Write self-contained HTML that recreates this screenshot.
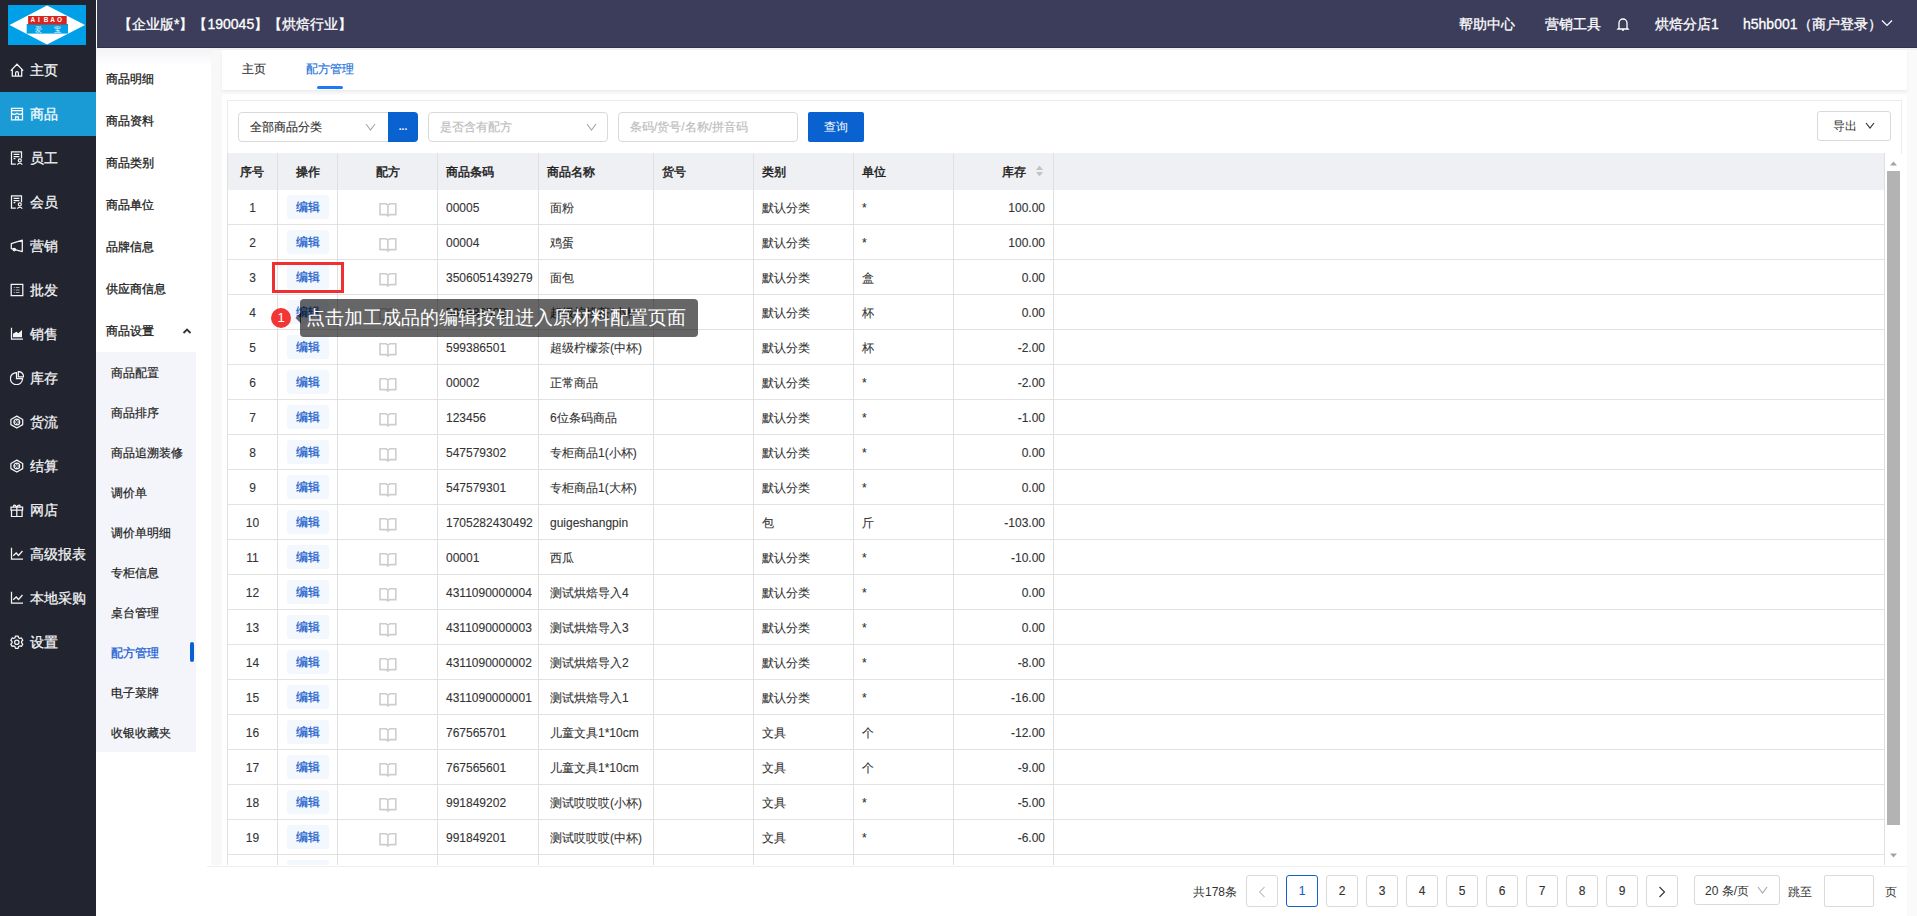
<!DOCTYPE html><html><head><meta charset="utf-8"><style>
*{box-sizing:border-box;margin:0;padding:0}
html,body{width:1917px;height:916px;overflow:hidden;background:#fff;font-family:"Liberation Sans",sans-serif;font-size:12px;color:#333}
.a{position:absolute;white-space:nowrap}
.mi{position:absolute;left:0;width:96px;height:44px;color:#f4f5f8;font-size:14px;line-height:44px}
.mi span{-webkit-text-stroke:0.25px currentColor}
.mi svg{position:absolute;left:10px;top:15px}
.mi span{position:absolute;left:30px;top:0}
.mi.on{background:#1b9bd6;color:#fff}
.si{position:absolute;left:106px;font-size:12px;line-height:16px;color:#222;-webkit-text-stroke:0.3px #222}
.ss{position:absolute;left:111px;font-size:12px;line-height:16px;color:#222;-webkit-text-stroke:0.2px currentColor}
.sel{position:absolute;height:30px;border:1px solid #d9d9d9;border-radius:4px;background:#fff;font-size:12px;line-height:28px;padding-left:11px;color:#333;-webkit-text-stroke:0.15px currentColor}
.th{position:absolute;top:154px;height:37px;line-height:37px;-webkit-text-stroke:0.45px #222;color:#222;font-size:12px}
.vl{position:absolute;width:1px;background:#e0e0e0}
.hl{position:absolute;height:1px;background:#e2e2e2}
.td{position:absolute;height:35px;line-height:35px;font-size:12px;color:#333;-webkit-text-stroke:0.1px #333}
.ed{position:absolute;left:287px;width:42px;height:24px;background:#f3f8ff;color:#0f56c9;font-size:12px;line-height:25px;text-align:center;border-radius:3px;-webkit-text-stroke:0.2px #0f56c9}
.bk{position:absolute;left:379px}
.pg{-webkit-text-stroke:0.15px currentColor;position:absolute;top:875px;width:32px;height:32px;border:1px solid #d9d9d9;border-radius:3px;text-align:center;line-height:31px;font-size:12px;color:#333;background:#fff}
</style></head><body>
<div class="a" style="left:0;top:0;width:96px;height:916px;background:#22252f"></div>
<div class="a" style="left:97px;top:0;width:1820px;height:48px;background:#3c3d5b;border-bottom:1px solid #30314d"></div>
<svg class="a" style="left:8px;top:5px" width="78" height="40" viewBox="0 0 78 40">
<rect width="78" height="40" fill="#00a0e9"/>
<polygon points="39,0.5 77,20 39,39.5 1.5,20" fill="#fff"/>
<rect x="18.7" y="19" width="41.3" height="9.6" fill="#00a0e9"/>
<rect x="20.1" y="11" width="38.6" height="8.6" fill="#d9251d"/>
<g font-size="6.4" font-weight="bold" fill="#fff" text-anchor="middle" font-family="Liberation Sans"><text x="24.7" y="17.2">A</text><text x="31" y="17.2">I</text><text x="38" y="17.2">B</text><text x="44.5" y="17.2">A</text><text x="51.5" y="17.2">O</text></g>
<text x="30" y="27" font-size="6.5" fill="#fff" text-anchor="middle">爱</text><text x="49" y="27" font-size="6.5" fill="#fff" text-anchor="middle">宝</text>
</svg>
<div class="a" style="left:118px;font-size:14px;line-height:20px;color:#fff;-webkit-text-stroke:0.3px #fff;top:14px">【企业版*】【190045】【烘焙行业】</div>
<div class="a" style="left:1459px;font-size:14px;line-height:20px;color:#fff;-webkit-text-stroke:0.3px #fff;top:14px">帮助中心</div>
<div class="a" style="left:1545px;font-size:14px;line-height:20px;color:#fff;-webkit-text-stroke:0.3px #fff;top:14px">营销工具</div>
<svg class="a" style="left:1616px;top:16px" width="14" height="16" viewBox="0 0 14 16"><path d="M3 12V7a4 4 0 0 1 8 0v5l1 1H2z M6 14h2" fill="none" stroke="#fff" stroke-width="1.3"/></svg>
<div class="a" style="left:1655px;font-size:14px;line-height:20px;color:#fff;-webkit-text-stroke:0.3px #fff;top:14px">烘焙分店1</div>
<div class="a" style="left:1743px;font-size:14px;line-height:20px;color:#fff;-webkit-text-stroke:0.3px #fff;top:14px">h5hb001（商户登录）</div>
<svg class="a" style="left:1881px;top:19px" width="12" height="9" viewBox="0 0 12 9"><path d="M1 1.5l5 5 5-5" fill="none" stroke="#fff" stroke-width="1.2"/></svg>
<div class="mi" style="top:48px"><svg width="14" height="14" viewBox="0 0 14 14"><path d="M0.8 7.6L7 1.2l6.2 6.4M2.3 6.2V13.2H11.7V6.2M5.6 13.2V10a1.4 1.4 0 0 1 2.8 0v3.2" fill="none" stroke="currentColor" stroke-width="1.25"/></svg><span>主页</span></div>
<div class="mi on" style="top:92px"><svg width="14" height="14" viewBox="0 0 14 14"><path d="M1.5 1.3H12.5V12.8H1.5ZM1.5 3.6H12.5M1.5 6.3Q4.25 8.6 7 6.3Q9.75 8.6 12.5 6.3M5.6 12.8V9.8H8.4V12.8" fill="none" stroke="currentColor" stroke-width="1.25"/></svg><span>商品</span></div>
<div class="mi" style="top:136px"><svg width="14" height="14" viewBox="0 0 14 14"><path d="M5.8 13.2H1.5V0.8H11.5V7.2M3.6 3.4H9.4M3.6 5.5H9.4M3.6 7.6H5.4" fill="none" stroke="currentColor" stroke-width="1.25"/><circle cx="9.8" cy="9.4" r="1.5" fill="none" stroke="currentColor" stroke-width="1.25"/><path d="M7.3 13.6Q9.8 10.6 12.3 13.6" fill="none" stroke="currentColor" stroke-width="1.25"/></svg><span>员工</span></div>
<div class="mi" style="top:180px"><svg width="14" height="14" viewBox="0 0 14 14"><path d="M5.8 13.2H1.5V0.8H11.5V7.2M3.6 3.4H9.4M3.6 5.5H9.4M3.6 7.6H5.4" fill="none" stroke="currentColor" stroke-width="1.25"/><circle cx="9.8" cy="9.4" r="1.5" fill="none" stroke="currentColor" stroke-width="1.25"/><path d="M7.3 13.6Q9.8 10.6 12.3 13.6" fill="none" stroke="currentColor" stroke-width="1.25"/></svg><span>会员</span></div>
<div class="mi" style="top:224px"><svg width="14" height="14" viewBox="0 0 14 14"><path d="M1.3 4.6L12.3 1.2V12.6L1.3 9.6Z" fill="none" stroke="currentColor" stroke-width="1.25" stroke-linejoin="round"/><circle cx="4.3" cy="10.6" r="1.2" fill="none" stroke="currentColor" stroke-width="1.25"/></svg><span>营销</span></div>
<div class="mi" style="top:268px"><svg width="14" height="14" viewBox="0 0 14 14"><path d="M1.2 1.3H12.8V12.7H1.2Z" fill="none" stroke="currentColor" stroke-width="1.25"/><path d="M3.8 4.5H4.8M5.8 4.5H9.5M3.8 7H4.8M5.8 7H9.5M3.8 9.5H4.8M5.8 9.5H9.5" fill="none" stroke="currentColor" stroke-width="0.9" opacity="0.7"/></svg><span>批发</span></div>
<div class="mi" style="top:312px"><svg width="14" height="14" viewBox="0 0 14 14"><path d="M1.5 0.8V12.2H13" fill="none" stroke="currentColor" stroke-width="1.25"/><path d="M3 10.2V6.8L6.4 4.8L8.4 6.3L12 3V10.2Z" fill="currentColor"/></svg><span>销售</span></div>
<div class="mi" style="top:356px"><svg width="14" height="14" viewBox="0 0 14 14"><path d="M6.5 1.5V7.6H12.6A6.1 6.1 0 1 1 6.5 1.5Z" fill="none" stroke="currentColor" stroke-width="1.25"/><path d="M8.3 0.5V5.8H13.6A5.3 5.3 0 0 0 8.3 0.5Z" fill="none" stroke="currentColor" stroke-width="1.25"/></svg><span>库存</span></div>
<div class="mi" style="top:400px"><svg width="14" height="14" viewBox="0 0 14 14"><path d="M6.8 1.1L12.7 4.5V9.6L6.8 13L0.9 9.6V4.5Z" fill="none" stroke="currentColor" stroke-width="1.25" stroke-linejoin="round"/><circle cx="6.8" cy="7" r="2.9" fill="none" stroke="currentColor" stroke-width="1.25"/><path d="M6.8 4.1V9.9M3.9 7H9.7" fill="none" stroke="currentColor" stroke-width="1"/><circle cx="6.8" cy="7" r="0.9" fill="#22252f"/></svg><span>货流</span></div>
<div class="mi" style="top:444px"><svg width="14" height="14" viewBox="0 0 14 14"><path d="M6.8 1.1L12.7 4.5V9.6L6.8 13L0.9 9.6V4.5Z" fill="none" stroke="currentColor" stroke-width="1.25" stroke-linejoin="round"/><circle cx="6.8" cy="7" r="2.9" fill="none" stroke="currentColor" stroke-width="1.25"/><path d="M6.8 4.1V9.9M3.9 7H9.7" fill="none" stroke="currentColor" stroke-width="1"/><circle cx="6.8" cy="7" r="0.9" fill="#22252f"/></svg><span>结算</span></div>
<div class="mi" style="top:488px"><svg width="14" height="14" viewBox="0 0 14 14"><path d="M1 4.2H12.6V7.1H1ZM1.5 7.1V13.6H12.1V7.1M6.8 4.2V13.6M6.8 4.2C5.2 1.2 2.8 1.6 3.8 4.2M6.8 4.2C8.4 1.2 10.8 1.6 9.8 4.2" fill="none" stroke="currentColor" stroke-width="1.25"/></svg><span>网店</span></div>
<div class="mi" style="top:532px"><svg width="14" height="14" viewBox="0 0 14 14"><path d="M1.5 0.8V12.2H13" fill="none" stroke="currentColor" stroke-width="1.25"/><path d="M3.2 8.8L6.2 6L8.5 8.5L12.5 4" fill="none" stroke="currentColor" stroke-width="1.25"/></svg><span>高级报表</span></div>
<div class="mi" style="top:576px"><svg width="14" height="14" viewBox="0 0 14 14"><path d="M1.5 0.8V12.2H13" fill="none" stroke="currentColor" stroke-width="1.25"/><path d="M3.2 8.8L6.2 6L8.5 8.5L12.5 4" fill="none" stroke="currentColor" stroke-width="1.25"/></svg><span>本地采购</span></div>
<div class="mi" style="top:620px"><svg width="14" height="14" viewBox="0 0 14 14"><path d="M5.00 2.75 L5.49 1.04 L8.11 1.04 L8.60 2.75 L9.76 3.42 L11.48 2.98 L12.79 5.25 L11.55 6.53 L11.55 7.87 L12.79 9.15 L11.48 11.42 L9.76 10.98 L8.60 11.65 L8.11 13.36 L5.49 13.36 L5.00 11.65 L3.84 10.98 L2.12 11.42 L0.81 9.15 L2.05 7.87 L2.05 6.53 L0.81 5.25 L2.12 2.98 L3.84 3.42Z" fill="none" stroke="currentColor" stroke-width="1.25" stroke-linejoin="round"/><circle cx="6.8" cy="7.2" r="2.2" fill="none" stroke="currentColor" stroke-width="1.25"/></svg><span>设置</span></div>
<div class="a" style="left:96px;top:48px;width:115px;height:868px;background:#fff"></div>
<div class="a" style="left:96px;top:48px;width:115px;height:18px;background:linear-gradient(#f3f3f6,#fff)"></div>
<div class="a" style="left:96px;top:352px;width:100px;height:400px;background:#f4f5fa"></div>
<div class="si" style="top:71px">商品明细</div>
<div class="si" style="top:113px">商品资料</div>
<div class="si" style="top:155px">商品类别</div>
<div class="si" style="top:197px">商品单位</div>
<div class="si" style="top:239px">品牌信息</div>
<div class="si" style="top:281px">供应商信息</div>
<div class="si" style="top:323px">商品设置</div>
<svg class="a" style="left:182px;top:327px" width="10" height="8" viewBox="0 0 10 8"><path d="M1.5 6L5 2.5 8.5 6" fill="none" stroke="#333" stroke-width="1.8"/></svg>
<div class="ss" style="top:365px;color:#222">商品配置</div>
<div class="ss" style="top:405px;color:#222">商品排序</div>
<div class="ss" style="top:445px;color:#222">商品追溯装修</div>
<div class="ss" style="top:485px;color:#222">调价单</div>
<div class="ss" style="top:525px;color:#222">调价单明细</div>
<div class="ss" style="top:565px;color:#222">专柜信息</div>
<div class="ss" style="top:605px;color:#222">桌台管理</div>
<div class="ss" style="top:645px;color:#1a60d2;-webkit-text-stroke:0.3px #1a60d2">配方管理</div>
<div class="ss" style="top:685px;color:#222">电子菜牌</div>
<div class="ss" style="top:725px;color:#222">收银收藏夹</div>
<div class="a" style="left:190px;top:642px;width:4px;height:20px;border-radius:2px;background:#0a5fd0"></div>
<div class="a" style="left:211px;top:48px;width:11px;height:868px;background:#f8f8f9"></div>
<div class="a" style="left:222px;top:48px;width:1695px;height:868px;background:#fafafa"></div>
<div class="a" style="left:211px;top:48px;width:1706px;height:2px;background:#f1f1f4"></div>
<div class="a" style="left:222px;top:50px;width:1685px;height:40px;background:#fff;box-shadow:0 2px 3px rgba(0,0,0,0.06)"></div>
<div class="a" style="left:242px;top:61px;font-size:12px;line-height:16px;color:#333;-webkit-text-stroke:0.15px #333">主页</div>
<div class="a" style="left:306px;top:61px;font-size:12px;line-height:16px;color:#1a6fdc;-webkit-text-stroke:0.15px #1a6fdc">配方管理</div>
<div class="a" style="left:317px;top:86px;width:26px;height:3px;border-radius:2px;background:#1a7cf0"></div>
<div class="a" style="left:222px;top:95px;width:1685px;height:821px;background:#fff"></div>
<div class="a" style="left:227px;top:100px;width:1675px;height:54px;border:1px solid #ececec;border-bottom:none"></div>
<div class="sel" style="left:238px;top:112px;width:155px;border-radius:4px 0 0 4px">全部商品分类</div>
<svg class="a" style="left:365px;top:123px" width="11" height="8" viewBox="0 0 11 8"><path d="M1 1L5.5 7L10 1" fill="none" stroke="#a6a6a6" stroke-width="1.1"/></svg>
<div class="a" style="left:388px;top:112px;width:30px;height:30px;background:#0a62d0;border-radius:0 4px 4px 0;color:#fff;font-size:10px;line-height:30px;text-align:center;font-weight:bold">...</div>
<div class="sel" style="left:428px;top:112px;width:180px;color:#bcbcbc">是否含有配方</div>
<svg class="a" style="left:586px;top:123px" width="11" height="8" viewBox="0 0 11 8"><path d="M1 1L5.5 7L10 1" fill="none" stroke="#a6a6a6" stroke-width="1.1"/></svg>
<div class="sel" style="left:618px;top:112px;width:180px;color:#bcbcbc">条码/货号/名称/拼音码</div>
<div class="a" style="left:808px;top:112px;width:56px;height:30px;background:#0a62d0;border-radius:2px;color:#fff;font-size:12px;line-height:30px;text-align:center">查询</div>
<div class="a" style="left:1817px;top:111px;width:74px;height:30px;border:1px solid #d9d9d9;border-radius:3px;font-size:12px;line-height:28px;padding-left:15px;color:#333">导出</div>
<svg class="a" style="left:1865px;top:122px" width="10" height="7" viewBox="0 0 10 7"><path d="M1 1L5.0 6L9 1" fill="none" stroke="#333" stroke-width="1.2"/></svg>
<div class="a" style="left:228px;top:153px;width:1656px;height:37px;background:#eff0f4"></div>
<div class="th" style="left:240px">序号</div>
<div class="th" style="left:296px">操作</div>
<div class="th" style="left:376px">配方</div>
<div class="th" style="left:446px">商品条码</div>
<div class="th" style="left:547px">商品名称</div>
<div class="th" style="left:662px">货号</div>
<div class="th" style="left:762px">类别</div>
<div class="th" style="left:862px">单位</div>
<div class="th" style="left:1002px">库存</div>
<svg class="a" style="left:1035px;top:165px" width="9" height="12" viewBox="0 0 9 12"><path d="M4.5 0.5L8 5H1z" fill="#c4c4c4"/><path d="M4.5 11.5L8 7H1z" fill="#c4c4c4"/></svg>
<div class="hl" style="left:228px;top:224px;width:1656px"></div>
<div class="td" style="left:228px;top:191px;width:49px;text-align:center">1</div>
<div class="ed" style="top:195px">编辑</div>
<div class="bk" style="top:202px"><svg width="18" height="16" viewBox="0 0 18 16"><path d="M1 1.8H7.1L8.9 3.3L10.7 1.8H16.8V12.6H10.7L8.9 14L7.1 12.6H1Z M8.9 3.3V14" fill="none" stroke="#cdcdcd" stroke-width="1.6" stroke-linejoin="miter"/></svg></div>
<div class="td" style="left:446px;top:191px">00005</div>
<div class="td" style="left:550px;top:191px">面粉</div>
<div class="td" style="left:762px;top:191px">默认分类</div>
<div class="td" style="left:862px;top:191px">*</div>
<div class="td" style="left:953px;top:191px;width:92px;text-align:right">100.00</div>
<div class="hl" style="left:228px;top:259px;width:1656px"></div>
<div class="td" style="left:228px;top:226px;width:49px;text-align:center">2</div>
<div class="ed" style="top:230px">编辑</div>
<div class="bk" style="top:237px"><svg width="18" height="16" viewBox="0 0 18 16"><path d="M1 1.8H7.1L8.9 3.3L10.7 1.8H16.8V12.6H10.7L8.9 14L7.1 12.6H1Z M8.9 3.3V14" fill="none" stroke="#cdcdcd" stroke-width="1.6" stroke-linejoin="miter"/></svg></div>
<div class="td" style="left:446px;top:226px">00004</div>
<div class="td" style="left:550px;top:226px">鸡蛋</div>
<div class="td" style="left:762px;top:226px">默认分类</div>
<div class="td" style="left:862px;top:226px">*</div>
<div class="td" style="left:953px;top:226px;width:92px;text-align:right">100.00</div>
<div class="hl" style="left:228px;top:294px;width:1656px"></div>
<div class="td" style="left:228px;top:261px;width:49px;text-align:center">3</div>
<div class="ed" style="top:265px">编辑</div>
<div class="bk" style="top:272px"><svg width="18" height="16" viewBox="0 0 18 16"><path d="M1 1.8H7.1L8.9 3.3L10.7 1.8H16.8V12.6H10.7L8.9 14L7.1 12.6H1Z M8.9 3.3V14" fill="none" stroke="#cdcdcd" stroke-width="1.6" stroke-linejoin="miter"/></svg></div>
<div class="td" style="left:446px;top:261px">3506051439279</div>
<div class="td" style="left:550px;top:261px">面包</div>
<div class="td" style="left:762px;top:261px">默认分类</div>
<div class="td" style="left:862px;top:261px">盒</div>
<div class="td" style="left:953px;top:261px;width:92px;text-align:right">0.00</div>
<div class="hl" style="left:228px;top:329px;width:1656px"></div>
<div class="td" style="left:228px;top:296px;width:49px;text-align:center">4</div>
<div class="ed" style="top:300px">编辑</div>
<div class="bk" style="top:307px"><svg width="18" height="16" viewBox="0 0 18 16"><path d="M1 1.8H7.1L8.9 3.3L10.7 1.8H16.8V12.6H10.7L8.9 14L7.1 12.6H1Z M8.9 3.3V14" fill="none" stroke="#cdcdcd" stroke-width="1.6" stroke-linejoin="miter"/></svg></div>
<div class="td" style="left:446px;top:296px">599386502</div>
<div class="td" style="left:550px;top:296px">超级柠檬茶(小杯)</div>
<div class="td" style="left:762px;top:296px">默认分类</div>
<div class="td" style="left:862px;top:296px">杯</div>
<div class="td" style="left:953px;top:296px;width:92px;text-align:right">0.00</div>
<div class="hl" style="left:228px;top:364px;width:1656px"></div>
<div class="td" style="left:228px;top:331px;width:49px;text-align:center">5</div>
<div class="ed" style="top:335px">编辑</div>
<div class="bk" style="top:342px"><svg width="18" height="16" viewBox="0 0 18 16"><path d="M1 1.8H7.1L8.9 3.3L10.7 1.8H16.8V12.6H10.7L8.9 14L7.1 12.6H1Z M8.9 3.3V14" fill="none" stroke="#cdcdcd" stroke-width="1.6" stroke-linejoin="miter"/></svg></div>
<div class="td" style="left:446px;top:331px">599386501</div>
<div class="td" style="left:550px;top:331px">超级柠檬茶(中杯)</div>
<div class="td" style="left:762px;top:331px">默认分类</div>
<div class="td" style="left:862px;top:331px">杯</div>
<div class="td" style="left:953px;top:331px;width:92px;text-align:right">-2.00</div>
<div class="hl" style="left:228px;top:399px;width:1656px"></div>
<div class="td" style="left:228px;top:366px;width:49px;text-align:center">6</div>
<div class="ed" style="top:370px">编辑</div>
<div class="bk" style="top:377px"><svg width="18" height="16" viewBox="0 0 18 16"><path d="M1 1.8H7.1L8.9 3.3L10.7 1.8H16.8V12.6H10.7L8.9 14L7.1 12.6H1Z M8.9 3.3V14" fill="none" stroke="#cdcdcd" stroke-width="1.6" stroke-linejoin="miter"/></svg></div>
<div class="td" style="left:446px;top:366px">00002</div>
<div class="td" style="left:550px;top:366px">正常商品</div>
<div class="td" style="left:762px;top:366px">默认分类</div>
<div class="td" style="left:862px;top:366px">*</div>
<div class="td" style="left:953px;top:366px;width:92px;text-align:right">-2.00</div>
<div class="hl" style="left:228px;top:434px;width:1656px"></div>
<div class="td" style="left:228px;top:401px;width:49px;text-align:center">7</div>
<div class="ed" style="top:405px">编辑</div>
<div class="bk" style="top:412px"><svg width="18" height="16" viewBox="0 0 18 16"><path d="M1 1.8H7.1L8.9 3.3L10.7 1.8H16.8V12.6H10.7L8.9 14L7.1 12.6H1Z M8.9 3.3V14" fill="none" stroke="#cdcdcd" stroke-width="1.6" stroke-linejoin="miter"/></svg></div>
<div class="td" style="left:446px;top:401px">123456</div>
<div class="td" style="left:550px;top:401px">6位条码商品</div>
<div class="td" style="left:762px;top:401px">默认分类</div>
<div class="td" style="left:862px;top:401px">*</div>
<div class="td" style="left:953px;top:401px;width:92px;text-align:right">-1.00</div>
<div class="hl" style="left:228px;top:469px;width:1656px"></div>
<div class="td" style="left:228px;top:436px;width:49px;text-align:center">8</div>
<div class="ed" style="top:440px">编辑</div>
<div class="bk" style="top:447px"><svg width="18" height="16" viewBox="0 0 18 16"><path d="M1 1.8H7.1L8.9 3.3L10.7 1.8H16.8V12.6H10.7L8.9 14L7.1 12.6H1Z M8.9 3.3V14" fill="none" stroke="#cdcdcd" stroke-width="1.6" stroke-linejoin="miter"/></svg></div>
<div class="td" style="left:446px;top:436px">547579302</div>
<div class="td" style="left:550px;top:436px">专柜商品1(小杯)</div>
<div class="td" style="left:762px;top:436px">默认分类</div>
<div class="td" style="left:862px;top:436px">*</div>
<div class="td" style="left:953px;top:436px;width:92px;text-align:right">0.00</div>
<div class="hl" style="left:228px;top:504px;width:1656px"></div>
<div class="td" style="left:228px;top:471px;width:49px;text-align:center">9</div>
<div class="ed" style="top:475px">编辑</div>
<div class="bk" style="top:482px"><svg width="18" height="16" viewBox="0 0 18 16"><path d="M1 1.8H7.1L8.9 3.3L10.7 1.8H16.8V12.6H10.7L8.9 14L7.1 12.6H1Z M8.9 3.3V14" fill="none" stroke="#cdcdcd" stroke-width="1.6" stroke-linejoin="miter"/></svg></div>
<div class="td" style="left:446px;top:471px">547579301</div>
<div class="td" style="left:550px;top:471px">专柜商品1(大杯)</div>
<div class="td" style="left:762px;top:471px">默认分类</div>
<div class="td" style="left:862px;top:471px">*</div>
<div class="td" style="left:953px;top:471px;width:92px;text-align:right">0.00</div>
<div class="hl" style="left:228px;top:539px;width:1656px"></div>
<div class="td" style="left:228px;top:506px;width:49px;text-align:center">10</div>
<div class="ed" style="top:510px">编辑</div>
<div class="bk" style="top:517px"><svg width="18" height="16" viewBox="0 0 18 16"><path d="M1 1.8H7.1L8.9 3.3L10.7 1.8H16.8V12.6H10.7L8.9 14L7.1 12.6H1Z M8.9 3.3V14" fill="none" stroke="#cdcdcd" stroke-width="1.6" stroke-linejoin="miter"/></svg></div>
<div class="td" style="left:446px;top:506px">1705282430492</div>
<div class="td" style="left:550px;top:506px">guigeshangpin</div>
<div class="td" style="left:762px;top:506px">包</div>
<div class="td" style="left:862px;top:506px">斤</div>
<div class="td" style="left:953px;top:506px;width:92px;text-align:right">-103.00</div>
<div class="hl" style="left:228px;top:574px;width:1656px"></div>
<div class="td" style="left:228px;top:541px;width:49px;text-align:center">11</div>
<div class="ed" style="top:545px">编辑</div>
<div class="bk" style="top:552px"><svg width="18" height="16" viewBox="0 0 18 16"><path d="M1 1.8H7.1L8.9 3.3L10.7 1.8H16.8V12.6H10.7L8.9 14L7.1 12.6H1Z M8.9 3.3V14" fill="none" stroke="#cdcdcd" stroke-width="1.6" stroke-linejoin="miter"/></svg></div>
<div class="td" style="left:446px;top:541px">00001</div>
<div class="td" style="left:550px;top:541px">西瓜</div>
<div class="td" style="left:762px;top:541px">默认分类</div>
<div class="td" style="left:862px;top:541px">*</div>
<div class="td" style="left:953px;top:541px;width:92px;text-align:right">-10.00</div>
<div class="hl" style="left:228px;top:609px;width:1656px"></div>
<div class="td" style="left:228px;top:576px;width:49px;text-align:center">12</div>
<div class="ed" style="top:580px">编辑</div>
<div class="bk" style="top:587px"><svg width="18" height="16" viewBox="0 0 18 16"><path d="M1 1.8H7.1L8.9 3.3L10.7 1.8H16.8V12.6H10.7L8.9 14L7.1 12.6H1Z M8.9 3.3V14" fill="none" stroke="#cdcdcd" stroke-width="1.6" stroke-linejoin="miter"/></svg></div>
<div class="td" style="left:446px;top:576px">4311090000004</div>
<div class="td" style="left:550px;top:576px">测试烘焙导入4</div>
<div class="td" style="left:762px;top:576px">默认分类</div>
<div class="td" style="left:862px;top:576px">*</div>
<div class="td" style="left:953px;top:576px;width:92px;text-align:right">0.00</div>
<div class="hl" style="left:228px;top:644px;width:1656px"></div>
<div class="td" style="left:228px;top:611px;width:49px;text-align:center">13</div>
<div class="ed" style="top:615px">编辑</div>
<div class="bk" style="top:622px"><svg width="18" height="16" viewBox="0 0 18 16"><path d="M1 1.8H7.1L8.9 3.3L10.7 1.8H16.8V12.6H10.7L8.9 14L7.1 12.6H1Z M8.9 3.3V14" fill="none" stroke="#cdcdcd" stroke-width="1.6" stroke-linejoin="miter"/></svg></div>
<div class="td" style="left:446px;top:611px">4311090000003</div>
<div class="td" style="left:550px;top:611px">测试烘焙导入3</div>
<div class="td" style="left:762px;top:611px">默认分类</div>
<div class="td" style="left:862px;top:611px">*</div>
<div class="td" style="left:953px;top:611px;width:92px;text-align:right">0.00</div>
<div class="hl" style="left:228px;top:679px;width:1656px"></div>
<div class="td" style="left:228px;top:646px;width:49px;text-align:center">14</div>
<div class="ed" style="top:650px">编辑</div>
<div class="bk" style="top:657px"><svg width="18" height="16" viewBox="0 0 18 16"><path d="M1 1.8H7.1L8.9 3.3L10.7 1.8H16.8V12.6H10.7L8.9 14L7.1 12.6H1Z M8.9 3.3V14" fill="none" stroke="#cdcdcd" stroke-width="1.6" stroke-linejoin="miter"/></svg></div>
<div class="td" style="left:446px;top:646px">4311090000002</div>
<div class="td" style="left:550px;top:646px">测试烘焙导入2</div>
<div class="td" style="left:762px;top:646px">默认分类</div>
<div class="td" style="left:862px;top:646px">*</div>
<div class="td" style="left:953px;top:646px;width:92px;text-align:right">-8.00</div>
<div class="hl" style="left:228px;top:714px;width:1656px"></div>
<div class="td" style="left:228px;top:681px;width:49px;text-align:center">15</div>
<div class="ed" style="top:685px">编辑</div>
<div class="bk" style="top:692px"><svg width="18" height="16" viewBox="0 0 18 16"><path d="M1 1.8H7.1L8.9 3.3L10.7 1.8H16.8V12.6H10.7L8.9 14L7.1 12.6H1Z M8.9 3.3V14" fill="none" stroke="#cdcdcd" stroke-width="1.6" stroke-linejoin="miter"/></svg></div>
<div class="td" style="left:446px;top:681px">4311090000001</div>
<div class="td" style="left:550px;top:681px">测试烘焙导入1</div>
<div class="td" style="left:762px;top:681px">默认分类</div>
<div class="td" style="left:862px;top:681px">*</div>
<div class="td" style="left:953px;top:681px;width:92px;text-align:right">-16.00</div>
<div class="hl" style="left:228px;top:749px;width:1656px"></div>
<div class="td" style="left:228px;top:716px;width:49px;text-align:center">16</div>
<div class="ed" style="top:720px">编辑</div>
<div class="bk" style="top:727px"><svg width="18" height="16" viewBox="0 0 18 16"><path d="M1 1.8H7.1L8.9 3.3L10.7 1.8H16.8V12.6H10.7L8.9 14L7.1 12.6H1Z M8.9 3.3V14" fill="none" stroke="#cdcdcd" stroke-width="1.6" stroke-linejoin="miter"/></svg></div>
<div class="td" style="left:446px;top:716px">767565701</div>
<div class="td" style="left:550px;top:716px">儿童文具1*10cm</div>
<div class="td" style="left:762px;top:716px">文具</div>
<div class="td" style="left:862px;top:716px">个</div>
<div class="td" style="left:953px;top:716px;width:92px;text-align:right">-12.00</div>
<div class="hl" style="left:228px;top:784px;width:1656px"></div>
<div class="td" style="left:228px;top:751px;width:49px;text-align:center">17</div>
<div class="ed" style="top:755px">编辑</div>
<div class="bk" style="top:762px"><svg width="18" height="16" viewBox="0 0 18 16"><path d="M1 1.8H7.1L8.9 3.3L10.7 1.8H16.8V12.6H10.7L8.9 14L7.1 12.6H1Z M8.9 3.3V14" fill="none" stroke="#cdcdcd" stroke-width="1.6" stroke-linejoin="miter"/></svg></div>
<div class="td" style="left:446px;top:751px">767565601</div>
<div class="td" style="left:550px;top:751px">儿童文具1*10cm</div>
<div class="td" style="left:762px;top:751px">文具</div>
<div class="td" style="left:862px;top:751px">个</div>
<div class="td" style="left:953px;top:751px;width:92px;text-align:right">-9.00</div>
<div class="hl" style="left:228px;top:819px;width:1656px"></div>
<div class="td" style="left:228px;top:786px;width:49px;text-align:center">18</div>
<div class="ed" style="top:790px">编辑</div>
<div class="bk" style="top:797px"><svg width="18" height="16" viewBox="0 0 18 16"><path d="M1 1.8H7.1L8.9 3.3L10.7 1.8H16.8V12.6H10.7L8.9 14L7.1 12.6H1Z M8.9 3.3V14" fill="none" stroke="#cdcdcd" stroke-width="1.6" stroke-linejoin="miter"/></svg></div>
<div class="td" style="left:446px;top:786px">991849202</div>
<div class="td" style="left:550px;top:786px">测试哎哎哎(小杯)</div>
<div class="td" style="left:762px;top:786px">文具</div>
<div class="td" style="left:862px;top:786px">*</div>
<div class="td" style="left:953px;top:786px;width:92px;text-align:right">-5.00</div>
<div class="hl" style="left:228px;top:854px;width:1656px"></div>
<div class="td" style="left:228px;top:821px;width:49px;text-align:center">19</div>
<div class="ed" style="top:825px">编辑</div>
<div class="bk" style="top:832px"><svg width="18" height="16" viewBox="0 0 18 16"><path d="M1 1.8H7.1L8.9 3.3L10.7 1.8H16.8V12.6H10.7L8.9 14L7.1 12.6H1Z M8.9 3.3V14" fill="none" stroke="#cdcdcd" stroke-width="1.6" stroke-linejoin="miter"/></svg></div>
<div class="td" style="left:446px;top:821px">991849201</div>
<div class="td" style="left:550px;top:821px">测试哎哎哎(中杯)</div>
<div class="td" style="left:762px;top:821px">文具</div>
<div class="td" style="left:862px;top:821px">*</div>
<div class="td" style="left:953px;top:821px;width:92px;text-align:right">-6.00</div>
<div class="hl" style="left:228px;top:889px;width:1656px"></div>
<div class="td" style="left:228px;top:856px;width:49px;text-align:center">20</div>
<div class="ed" style="top:860px">编辑</div>
<div class="bk" style="top:867px"><svg width="18" height="16" viewBox="0 0 18 16"><path d="M1 1.8H7.1L8.9 3.3L10.7 1.8H16.8V12.6H10.7L8.9 14L7.1 12.6H1Z M8.9 3.3V14" fill="none" stroke="#cdcdcd" stroke-width="1.6" stroke-linejoin="miter"/></svg></div>
<div class="td" style="left:446px;top:856px"></div>
<div class="td" style="left:550px;top:856px"></div>
<div class="td" style="left:762px;top:856px"></div>
<div class="td" style="left:862px;top:856px"></div>
<div class="td" style="left:953px;top:856px;width:92px;text-align:right"></div>
<div class="vl" style="left:277px;top:153px;height:712px"></div>
<div class="vl" style="left:337px;top:153px;height:712px"></div>
<div class="vl" style="left:437px;top:153px;height:712px"></div>
<div class="vl" style="left:538px;top:153px;height:712px"></div>
<div class="vl" style="left:653px;top:153px;height:712px"></div>
<div class="vl" style="left:753px;top:153px;height:712px"></div>
<div class="vl" style="left:853px;top:153px;height:712px"></div>
<div class="vl" style="left:953px;top:153px;height:712px"></div>
<div class="vl" style="left:1053px;top:153px;height:712px"></div>
<div class="vl" style="left:227px;top:153px;height:712px"></div>
<div class="a" style="left:208px;top:865px;width:1699px;height:51px;background:#fff"></div>
<div class="a" style="left:207px;top:866px;width:1700px;height:1px;background:#efefef"></div>
<div class="a" style="left:1884px;top:153px;width:1px;height:712px;background:#e0e0e0"></div>
<div class="a" style="left:1887px;top:171px;width:13px;height:654px;background:#b3b3b3"></div>
<svg class="a" style="left:1889px;top:161px" width="9" height="5" viewBox="0 0 9 5"><path d="M4.5 0.5L8 4.5H1z" fill="#a3a3a3"/></svg>
<svg class="a" style="left:1889px;top:853px" width="9" height="5" viewBox="0 0 9 5"><path d="M4.5 4.5L8 0.5H1z" fill="#a3a3a3"/></svg>
<div class="a" style="left:1193px;top:884px;font-size:12px;line-height:16px;color:#333">共178条</div>
<div class="pg" style="left:1246px"></div>
<svg class="a" style="left:1258px;top:886px" width="8" height="12" viewBox="0 0 8 12"><path d="M6.5 1L1.5 6l5 5" fill="none" stroke="#c0c4cc" stroke-width="1.1"/></svg>
<div class="pg" style="left:1286px;border-color:#1560c8;color:#1560c8">1</div>
<div class="pg" style="left:1326px;">2</div>
<div class="pg" style="left:1366px;">3</div>
<div class="pg" style="left:1406px;">4</div>
<div class="pg" style="left:1446px;">5</div>
<div class="pg" style="left:1486px;">6</div>
<div class="pg" style="left:1526px;">7</div>
<div class="pg" style="left:1566px;">8</div>
<div class="pg" style="left:1606px;">9</div>
<div class="pg" style="left:1646px"></div>
<svg class="a" style="left:1658px;top:886px" width="8" height="12" viewBox="0 0 8 12"><path d="M1.5 1l5 5-5 5" fill="none" stroke="#333" stroke-width="1.1"/></svg>
<div class="a" style="left:1694px;top:875px;width:86px;height:30px;border:1px solid #d9d9d9;border-radius:3px;font-size:12px;line-height:30px;padding-left:10px;color:#333">20 条/页</div>
<svg class="a" style="left:1757px;top:886px" width="11" height="8" viewBox="0 0 11 8"><path d="M1 1L5.5 7L10 1" fill="none" stroke="#a6a6a6" stroke-width="1.1"/></svg>
<div class="a" style="left:1788px;top:884px;font-size:12px;line-height:16px;color:#333">跳至</div>
<div class="a" style="left:1824px;top:875px;width:50px;height:32px;border:1px solid #d9d9d9;border-radius:2px"></div>
<div class="a" style="left:1885px;top:884px;font-size:12px;line-height:16px;color:#333">页</div>
<div class="a" style="left:272px;top:262px;width:72px;height:31px;border:3px solid #f03030"></div>
<div class="a" style="left:300px;top:299px;width:398px;height:38px;background:rgba(0,0,0,0.6);border-radius:4px;color:#fff;font-size:19px;line-height:38px;padding-left:6px;font-weight:300">点击加工成品的编辑按钮进入原材料配置页面</div>
<svg class="a" style="left:295px;top:312px" width="6" height="12" viewBox="0 0 6 12"><path d="M6 0.5L0.5 6L6 11.5Z" fill="rgba(0,0,0,0.6)"/></svg><div class="a" style="left:271px;top:308px;width:20px;height:20px;border-radius:50%;background:#f23535;color:#fff;font-size:13px;line-height:20px;text-align:center">1</div>
</body></html>
